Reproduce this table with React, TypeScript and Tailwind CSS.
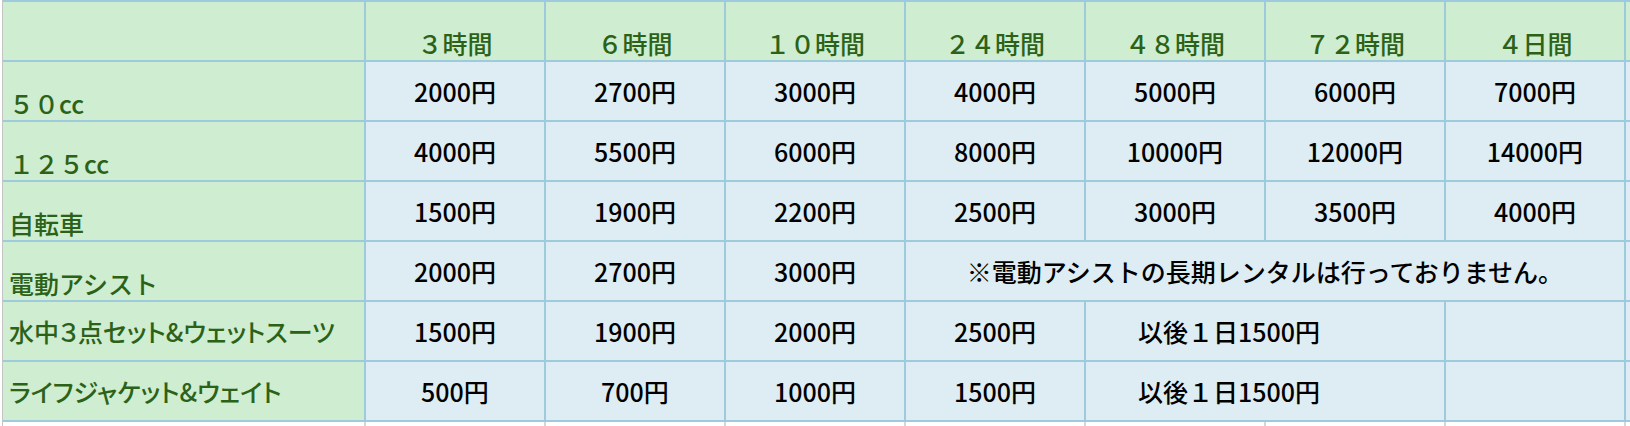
import React from "react";

const FONT = "font-['Noto_Sans_CJK_JP','Noto_Sans_CJK_SC',sans-serif]";

const headers = ["３時間", "６時間", "１０時間", "２４時間", "４８時間", "７２時間", "４日間"];

function Label({ text, align, palt }: { text: string; align: "end" | "center"; palt?: boolean }) {
  return (
    <div
      className={`h-[58px] bg-[#cfedd0] flex pl-[6px] text-[25px] font-medium leading-none text-[#2b6218] whitespace-nowrap ${
        align === "end" ? "items-end pb-[4px]" : "items-center"
      } ${palt ? "[font-feature-settings:'palt']" : ""}`}
    >
      {text}
    </div>
  );
}

function Price({ v }: { v: string }) {
  return (
    <div className="h-[58px] bg-[#deedf3] flex items-center justify-center text-[25px] font-medium leading-none text-black whitespace-nowrap">
      {v}
    </div>
  );
}

function Blank() {
  return <div className="h-[58px] bg-[#deedf3]" />;
}

const fullRows = [
  { label: "５０cc", vals: ["2000円", "2700円", "3000円", "4000円", "5000円", "6000円", "7000円"] },
  { label: "１２５cc", vals: ["4000円", "5500円", "6000円", "8000円", "10000円", "12000円", "14000円"] },
  { label: "自転車", vals: ["1500円", "1900円", "2200円", "2500円", "3000円", "3500円", "4000円"] },
];

export default function App() {
  return (
    <div className={`w-[1630px] h-[426px] bg-white flex overflow-hidden ${FONT}`}>
      <div className="w-[2px] bg-white" />
      <div className="w-px bg-[#c4c4c4]" />
      <div className="flex-1 flex flex-col">
        <div className="grid grid-cols-[361px_repeat(7,178px)_1fr] gap-[2px] pt-[2px] pb-[2px] bg-[#9ecbdb]">
          {/* header */}
          <div className="h-[58px] bg-[#cfedd0]" />
          {headers.map((h) => (
            <div
              key={h}
              className="h-[58px] bg-[#cfedd0] flex items-end justify-center pb-[4px] text-[25px] font-medium leading-none text-[#2b6218] whitespace-nowrap"
            >
              {h}
            </div>
          ))}
          <div className="h-[58px] bg-[#cfedd0]" />

          {fullRows.map((r) => (
            <React.Fragment key={r.label}>
              <Label text={r.label} align="end" />
              {r.vals.map((v, i) => (
                <Price key={i} v={v} />
              ))}
              <Blank />
            </React.Fragment>
          ))}

          {/* 電動アシスト */}
          <Label text="電動アシスト" align="end" />
          <Price v="2000円" />
          <Price v="2700円" />
          <Price v="3000円" />
          <div className="col-span-4 h-[58px] bg-[#deedf3] flex items-center justify-center text-[25px] font-medium leading-none text-black whitespace-nowrap">
            ※電動アシストの長期レンタルは行っておりません。
          </div>
          <Blank />

          {/* 水中 */}
          <Label text="水中３点セット&ウェットスーツ" align="center" palt />
          <Price v="1500円" />
          <Price v="1900円" />
          <Price v="2000円" />
          <Price v="2500円" />
          <div className="col-span-2 h-[58px] bg-[#deedf3] flex items-center pl-[52px] text-[25px] font-medium leading-none text-black whitespace-nowrap">
            以後１日1500円
          </div>
          <Blank />
          <Blank />

          {/* ライフジャケット */}
          <Label text="ライフジャケット&ウェイト" align="center" palt />
          <Price v="500円" />
          <Price v="700円" />
          <Price v="1000円" />
          <Price v="1500円" />
          <div className="col-span-2 h-[58px] bg-[#deedf3] flex items-center pl-[52px] text-[25px] font-medium leading-none text-black whitespace-nowrap">
            以後１日1500円
          </div>
          <Blank />
          <Blank />
        </div>
        <div className="grid grid-cols-[361px_repeat(7,178px)_1fr] gap-x-[2px] bg-[#d6d6d6] flex-1">
          {Array.from({ length: 9 }).map((_, i) => (
            <div key={i} className="bg-white" />
          ))}
        </div>
      </div>
    </div>
  );
}
